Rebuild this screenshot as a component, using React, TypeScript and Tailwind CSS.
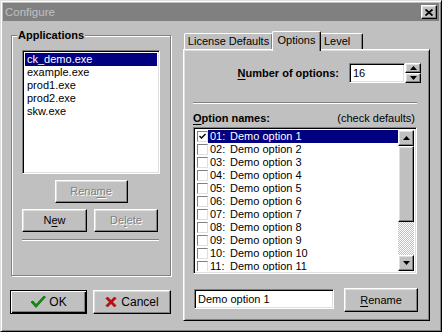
import { ReactNode } from "react";

const raised =
  "border border-t-white border-l-white border-r-black border-b-black shadow-[inset_-1px_-1px_0_#808080,inset_1px_1px_0_#dfdfdf]";
const sunken =
  "border border-t-[#808080] border-l-[#808080] border-r-white border-b-white shadow-[inset_1px_1px_0_#000,inset_-1px_-1px_0_#dfdfdf]";
const disabledText = "text-[#808080] [text-shadow:1px_1px_0_#fff]";

const Btn = ({ children, className = "", disabled = false }: { children: ReactNode; className?: string; disabled?: boolean }) => (
  <div className={`${raised} flex items-center justify-center bg-[#c0c0c0] ${disabled ? disabledText : "text-black"} ${className}`}>
    {children}
  </div>
);

const U = ({ children }: { children: ReactNode }) => <span className="underline underline-offset-[2px]">{children}</span>;

const apps = ["ck_demo.exe", "example.exe", "prod1.exe", "prod2.exe", "skw.exe"];
const options = Array.from({ length: 11 }, (_, i) => i + 1);

const Arrow = ({ up }: { up?: boolean }) => (
  <svg width="7" height="4" viewBox="0 0 7 4">
    <path d={up ? "M3.5 0 L7 4 L0 4 Z" : "M0 0 L7 0 L3.5 4 Z"} fill="#000" />
  </svg>
);

const App = () => {
  return (
    <div className="w-[442px] h-[332px] bg-[#c0c0c0] font-['Liberation_Sans',Arial,sans-serif] text-[11px] leading-[13px] text-black border border-t-[#dfdfdf] border-l-[#dfdfdf] border-r-black border-b-black shadow-[inset_1px_1px_0_#fff,inset_-1px_-1px_0_#808080] p-[2px] flex flex-col">
      {/* title bar */}
      <div className="h-[18px] bg-[#808080] flex items-center pl-[2px] pr-[2px]">
        <span className="text-[11.5px] text-[#c0c0c0] flex-1">Configure</span>
        <div className={`${raised} w-[16px] h-[14px] flex items-center justify-center bg-[#c0c0c0]`}>
          <svg width="8" height="7" viewBox="0 0 8 7">
            <path d="M0.5 0.5 L7.5 6.5 M7.5 0.5 L0.5 6.5" stroke="#000" strokeWidth="1.8" />
          </svg>
        </div>
      </div>

      <div className="flex pl-[7px] pt-[10px]">
        {/* left column */}
        <div className="w-[161px] flex flex-col">
          <div className="relative mt-[4px] ml-[1px] w-[160px] h-[241px] border border-[#808080] shadow-[inset_1px_1px_0_#fff,1px_1px_0_#fff] pl-[10px] pt-[14px]">
            <span className="absolute -top-[7px] left-[5px] px-[1px] bg-[#c0c0c0] font-bold">Applications</span>
            <div className="w-[138px] flex flex-col">
              <div className={`${sunken} h-[124px] bg-white p-[2px]`}>
                {apps.map((a, i) => (
                  <div key={a} className={`h-[13px] pl-[2px] ${i === 0 ? "bg-[#000080] text-white" : ""}`}>
                    {a}
                  </div>
                ))}
              </div>
              <Btn disabled className="mt-[6px] mx-auto w-[73px] h-[23px]">
                <span>
                  Rena<U>m</U>e
                </span>
              </Btn>
              <div className="flex mt-[6px]">
                <Btn className="w-[65px] h-[23px]">
                  <span>
                    N<U>e</U>w
                  </span>
                </Btn>
                <Btn disabled className="ml-[7px] w-[64px] h-[23px]">
                  <span>
                    De<U>l</U>ete
                  </span>
                </Btn>
              </div>
              <div className="mt-[7px] w-[137px] h-[2px] border-t border-t-[#808080] border-b border-b-white" />
            </div>
          </div>
          <div className="flex mt-[14px]">
            <div className="w-[77px] h-[24px] border border-black bg-[#c0c0c0] shadow-[inset_1px_1px_0_#fff,inset_-1px_-1px_0_#000,inset_-2px_-2px_0_#808080] flex items-center justify-center gap-[3px]">
              <svg width="16" height="14" viewBox="0 0 16 14">
                <path d="M1 7 L3 6 L6 9.5 L14 1 L15.5 2 L6 12.5 Z" fill="#00a000" stroke="#004000" strokeWidth="0.6" />
              </svg>
              <span className="text-[12px]">OK</span>
            </div>
            <Btn className="ml-[6px] w-[78px] h-[24px] gap-[4px]">
              <svg width="12" height="12" viewBox="0 0 12 12">
                <path d="M1 2.5 L2.5 1 L6 4.5 L9.5 1 L11 2.5 L7.5 6 L11 9.5 L9.5 11 L6 7.5 L2.5 11 L1 9.5 L4.5 6 Z" fill="#e00000" stroke="#600000" strokeWidth="0.6" />
              </svg>
              <span className="text-[12px]">Cancel</span>
            </Btn>
          </div>
        </div>

        {/* right column: tab control */}
        <div className="ml-[12px] w-[247px] flex flex-col">
          <div className="h-[18px] flex items-end pl-[1px]">
            <div className="w-[89px] h-[16px] border-t border-l border-white border-r border-r-black rounded-tl-[2px] rounded-tr-[2px] shadow-[inset_-1px_0_0_#808080] flex items-center justify-center">
              License Defaults
            </div>
            <div className="relative z-10 -ml-[1px] -mb-[2px] w-[49px] h-[20px] bg-[#c0c0c0] border-t border-l border-white border-r border-r-black rounded-tl-[2px] rounded-tr-[2px] shadow-[inset_-1px_0_0_#808080] flex justify-center pt-[2px]">
              Options
            </div>
            <div className="w-[42px] h-[16px] border-t border-white border-r border-r-black rounded-tr-[2px] shadow-[inset_-1px_0_0_#808080] flex items-center pl-[3px]">
              Level
            </div>
          </div>
          <div className="h-[272px] border border-t-white border-l-white border-r-black border-b-black shadow-[inset_1px_1px_0_#dfdfdf,inset_-1px_-1px_0_#808080] pl-[9px] pr-[11px] pt-[13px] flex flex-col">
            <div className="h-[20px] flex items-center justify-end -mr-[3px]">
              <span className="font-bold">
                <U>N</U>umber of options:
              </span>
              <div className={`${sunken} ml-[10px] w-[56px] h-[20px] bg-white pl-[3px] flex items-center`}>16</div>
              <div className="w-[16px] h-[20px] flex flex-col">
                <Btn className="h-[10px]">
                  <Arrow up />
                </Btn>
                <Btn className="h-[10px]">
                  <Arrow />
                </Btn>
              </div>
            </div>
            <div className="mt-[19px] w-[224px] h-[2px] border-t border-t-[#808080] border-b border-b-white" />
            <div className="mt-[8px] flex justify-between pr-[3px]">
              <span className="font-bold">
                <U>O</U>ption names:
              </span>
              <span>(check defaults)</span>
            </div>
            <div className={`${sunken} mt-[2px] w-[224px] h-[147px] bg-white p-[2px] flex overflow-hidden`}>
              <div className="flex-1 flex flex-col overflow-hidden">
                {options.map((n) => (
                  <div key={n} className="h-[13px] shrink-0 flex items-center">
                    <div className="ml-[1px] w-[11px] h-[11px] border border-t-[#808080] border-l-[#808080] border-r-[#dfdfdf] border-b-[#dfdfdf] bg-white flex items-center justify-center">
                      {n === 1 && (
                        <svg width="7" height="7" viewBox="0 0 7 7">
                          <path d="M0.5 3 L2.5 5 L6.5 1" stroke="#000" strokeWidth="1.4" fill="none" />
                        </svg>
                      )}
                    </div>
                    <div className={`flex-1 h-[13px] flex items-center pl-[2px] ${n === 1 ? "bg-[#000080] text-white" : ""}`}>
                      <span className="w-[20px]">{String(n).padStart(2, "0")}:</span>
                      <span>Demo option {n}</span>
                    </div>
                  </div>
                ))}
              </div>
              <div className="w-[16px] flex flex-col">
                <Btn className="h-[16px] shrink-0">
                  <Arrow up />
                </Btn>
                <Btn className="h-[76px] shrink-0" >
                  <span />
                </Btn>
                <div className="flex-1 bg-[repeating-conic-gradient(#c0c0c0_0_25%,#fff_0_50%)] bg-[length:2px_2px]" />
                <Btn className="h-[16px] shrink-0">
                  <Arrow />
                </Btn>
              </div>
            </div>
            <div className="mt-[14px] flex items-start">
              <div className={`${sunken} mt-[1px] ml-[1px] w-[140px] h-[20px] bg-white pl-[3px] flex items-center`}>Demo option 1</div>
              <Btn className="ml-auto w-[74px] h-[24px]">
                <span>
                  <U>R</U>ename
                </span>
              </Btn>
            </div>
          </div>
        </div>
      </div>
    </div>
  );
};

export default App;
